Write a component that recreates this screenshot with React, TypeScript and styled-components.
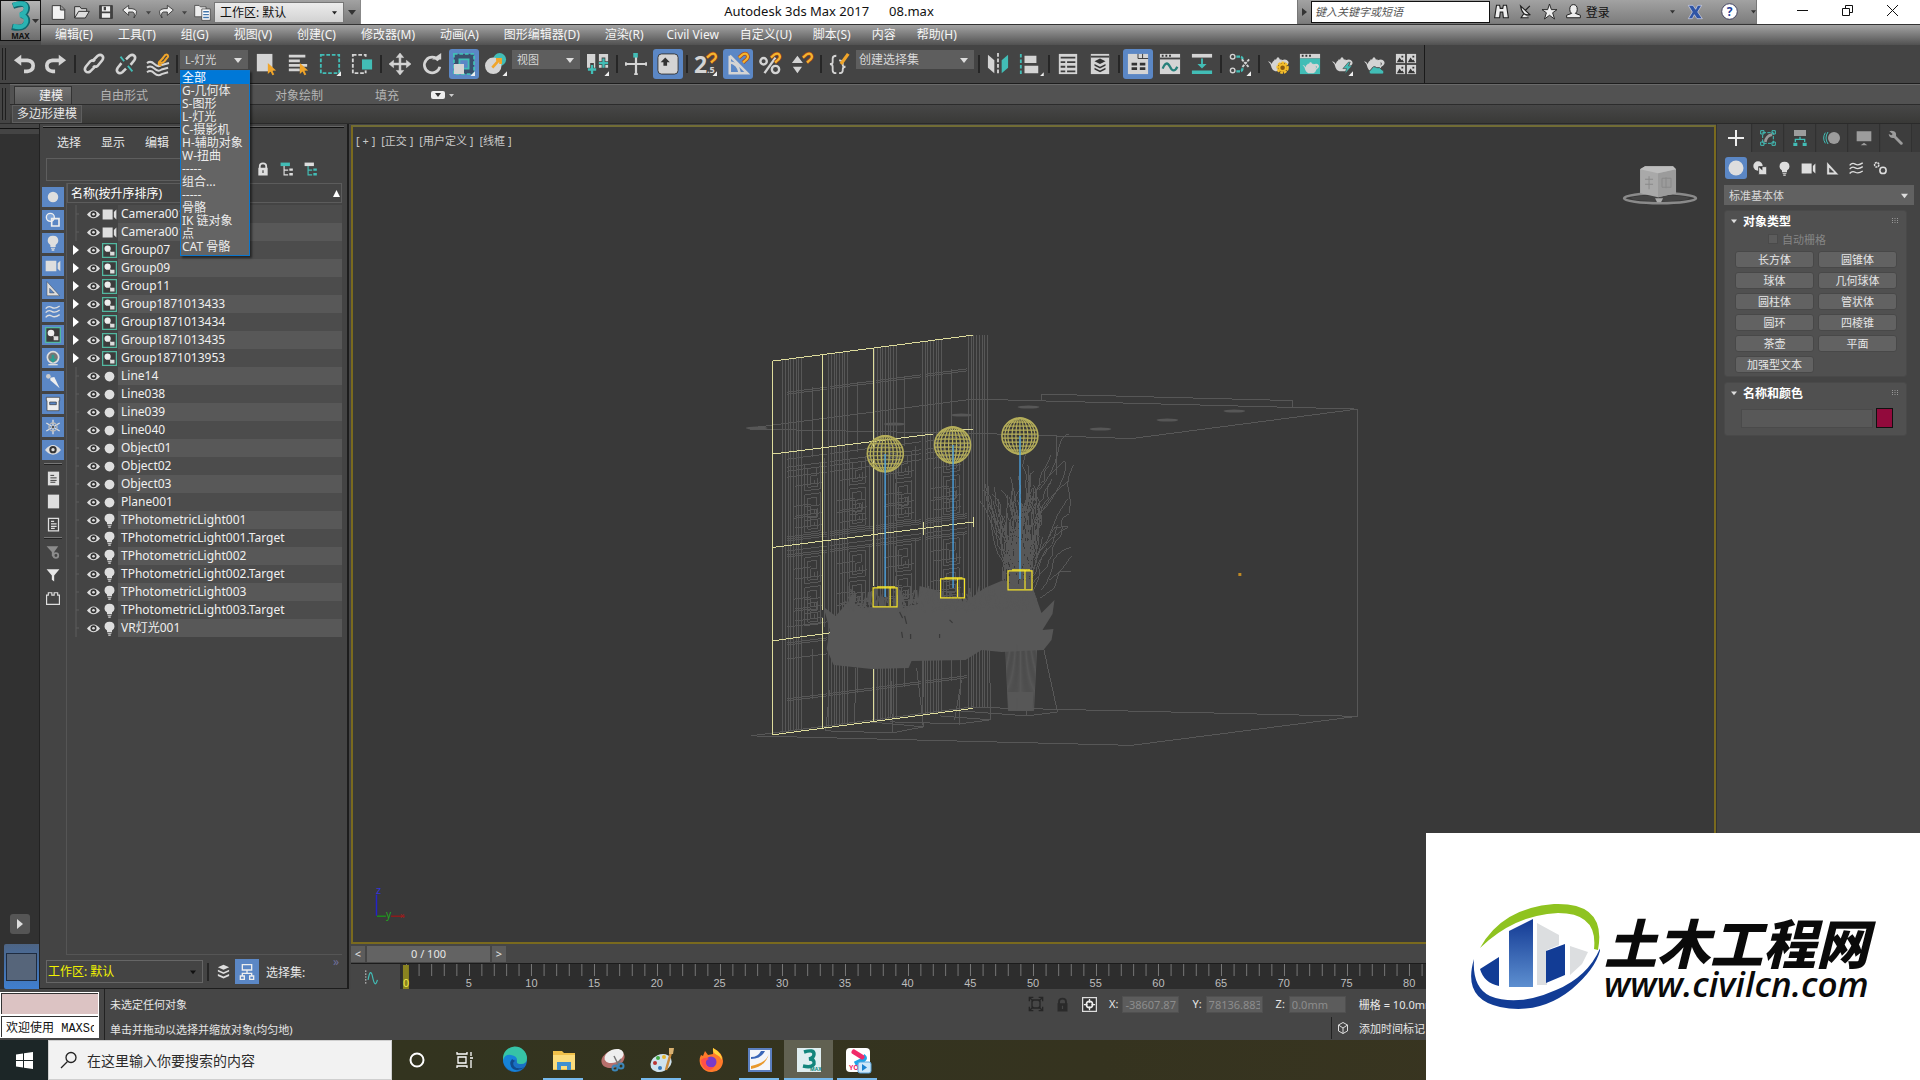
import React from "react";
import styled, { createGlobalStyle, css } from "styled-components";

const C = {
  icon: "#d4d4d4",
  teal: "#42bdb6",
  orange: "#f0a52a",
  blue: "#5b87c5",
  panel: "#444444",
  text: "#e6e6e6",
};

const Global = createGlobalStyle`
  * { box-sizing: border-box; }
  body { margin: 0; background: #393939; overflow: hidden; }
  body, button, input, select {
    font-family: "Noto Sans", "Noto Sans CJK SC", sans-serif;
    font-size: 12px;
  }
  button, input, select { margin: 0; padding: 0; border: 0; color: inherit; outline: 0; }
  button { background: none; }
  ul { list-style: none; margin: 0; padding: 0; }
  svg { display: block; flex: none; }
`;

/* ---------- icons ---------- */

const Cursor = () => <path d="M14 11l9 8-4 .4 2 4-2 .8-2-4-3 2.600z" fill={C.orange} />;
const Corner = () => <path d="M24 20v5h-5z" fill="#eee" />;
const Magnet = ({ x = 12, y = 0 }: { x?: number; y?: number }) => (
  <g transform={`translate(${x} ${y})`} fill="none">
    <path d="M1 5l4-3.500q4-2 5.500 1t-3 6l-2 2" stroke="#a8471c" strokeWidth="4" />
    <path d="M1 5l4-3.500q4-2 5.500 1t-3 6l-2 2" stroke="#f3b52e" strokeWidth="2.400" />
  </g>
);
const Teapot = () => (
  <path d="M1 9q3 0 4 3 1-3 3-4V7h2l1-2h2l1 2h2v1q5-2 7 1t-3 6q-1 4-4 5H9q-3-1-4-4-1-5-4-7zm18 1q1 2 0 4 3-3 0-4z" fill={C.icon} />
);

const icons: Record<string, React.ReactNode> = {
  undo: <path d="M9 2L1 8l8 6v-4h6q5 0 5 4t-5 4h-3v4h4q8-1 8-8t-8-8H9z" fill={C.icon} />,
  redo: <path d="M15 2l8 6-8 6v-4H9q-5 0-5 4t5 4h2v4H8q-8-1-8-8t8-8h7z" fill={C.icon} />,
  link: (
    <g fill="none" stroke={C.icon} strokeWidth="2.800">
      <path d="M10 9l6-6q3-2 5 0t0 5l-5 6q-3 2-5 0" />
      <path d="M14 14l-6 6q-3 2-5 0t0-5l5-6q3-2 5 0" />
    </g>
  ),
  unlink: (
    <g fill="none" stroke={C.icon} strokeWidth="2.800">
      <path d="M12 7l4-4q3-2 5 0t0 5l-4 5M12 17l-4 4q-3 2-5 0t0-5l4-5" />
      <path d="M6 4l4 5M14 14l5 6" stroke={C.teal} strokeWidth="2" />
    </g>
  ),
  bind: (
    <g fill="none" stroke={C.icon} strokeWidth="2.200">
      <path d="M0 11q4-3 8 1t8 1l8-2M0 16q4-3 8 1t8 1l7-2M0 21q4-3 8 1t8 1l7-2" />
      <path d="M16 7l4-5q3-1 3 2l-4 5q-3 3-5 1M18 5l-5 5q-1 4 3 3" stroke={C.orange} />
    </g>
  ),
  select: (<g><path d="M2 1h17v19H2z" fill={C.icon} /><Cursor /></g>),
  selectName: (<g><path d="M2 2h18v3H2zM2 7h12v3H2zM2 12h20v3H2zM2 17h12v3H2z" fill={C.icon} /><Cursor /></g>),
  region: (<g><path d="M2 2h20v20H2z" fill="none" stroke={C.teal} strokeWidth="2" strokeDasharray="4 2" /><Corner /></g>),
  crossing: (<g><path d="M2 2h14v20H2z" fill="none" stroke={C.icon} strokeWidth="2" strokeDasharray="4 2" /><path d="M10 5h15v14H10z" fill="#444" /><path d="M12 7h11v11H12z" fill={C.teal} /></g>),
  move: <path d="M12 0l4 5h-3v6h6V8l5 4-5 4v-3h-6v6h3l-4 5-4-5h3v-6H5v3l-5-4 5-4v3h6V5H8z" fill={C.icon} stroke={C.icon} strokeWidth=".6" />,
  rotate: (<g><path d="M19 8a8.500 8.500 0 1 0 1.500 7" fill="none" stroke={C.icon} strokeWidth="3" /><path d="M12 7h10V0z" fill={C.icon} /></g>),
  scale: (
    <g fill="none">
      <path d="M1 1h22v22H1z" fill="#3a4f6c" stroke={C.teal} strokeWidth="2" strokeDasharray="4 2" />
      <path d="M7 7h10v10H7z" stroke={C.teal} strokeWidth="2" fill="#5b87c5" />
      <path d="M1 12h11v11H1z" fill={C.icon} /><Corner />
    </g>
  ),
  place: (
    <g>
      <circle cx="16" cy="7" r="7" fill={C.teal} /><circle cx="9" cy="14" r="9" fill={C.icon} />
      <path d="M8 16l8-9M12 7h5v5" fill="none" stroke={C.orange} strokeWidth="3" /><Corner />
    </g>
  ),
  pivot: (
    <g>
      <path d="M0 1h9v17H0zM13 1h10v15H13z" fill={C.icon} />
      <path d="M5.500 11v12M0 18h11M18 5v12M13 11h11" stroke="#444" strokeWidth="4" />
      <path d="M5.500 13v10M1 18h9M18 6v10M13 11h10" stroke={C.teal} strokeWidth="2.500" /><Corner />
    </g>
  ),
  manip: (<g><path d="M12 4v19M1 12h22" stroke={C.icon} strokeWidth="2.400" /><path d="M1 10v4M23 10v4M10 23h4" stroke={C.icon} strokeWidth="2" /><path d="M9 0h5v5H9z" fill={C.teal} /></g>),
  keyboard: (<g><rect x="1" y="1" width="22" height="22" rx="4" fill={C.icon} stroke="#333" /><path d="M9 5l5 5h-3v4H7v-4H4z" fill="#333" /></g>),
  snap: (<g fontFamily="Noto Sans" fontWeight="700" fill={C.icon}><text x="-1" y="22" fontSize="25">2</text><text x="13" y="22" fontSize="10">.5</text><Magnet /><Corner /></g>),
  angle: (<g fill="none"><path d="M3 3v19h19L3 3M3 10q9 1 11 12" stroke={C.icon} strokeWidth="2.800" /><Magnet /></g>),
  percent: (<g fill="none" stroke={C.icon} strokeWidth="2.600"><circle cx="5" cy="9" r="3.500" /><circle cx="18" cy="18" r="4" /><path d="M18 5L6 22" /><Magnet /></g>),
  spinner: (<g><path d="M7 3l6 8H1zM7 22l5-7H2z" fill={C.icon} /><Magnet /></g>),
  named: (<g fill="none" stroke={C.icon} strokeWidth="2"><path d="M8 3q-4 0-4 3v4q0 2-3 2 3 0 3 3v4q0 3 4 3M11 8q4 0 4 3v2q0 2 3 2-3 0-3 3v1q0 3-4 3" /><path d="M21 1l-8 11" stroke={C.orange} strokeWidth="3.500" /></g>),
  mirror: (<g><path d="M1 2l7 6v14l-7-6z" fill={C.icon} /><path d="M23 2l-7 6v14l7-6z" fill={C.teal} /><path d="M12 0v24" stroke={C.icon} strokeWidth="2" strokeDasharray="4 2" /></g>),
  align: (<g><path d="M2 1v22" stroke={C.teal} strokeWidth="2" strokeDasharray="4 2" /><path d="M6 3h13v8H6zM6 14h15v8H6z" fill={C.icon} /><path d="M27 21v4h-4z" fill="#eee" /></g>),
  layers: (<g><path d="M2 1h20v22H2z" fill={C.icon} /><path d="M4 5h16M4 10h5M11 10h9M4 15h5M11 15h9M4 20h5M11 20h9" stroke="#3c3c3c" strokeWidth="2" /></g>),
  toggle: (<g><path d="M2 1h20v22H2z" fill={C.icon} /><path d="M2 4h20" stroke="#444" strokeWidth="2" /><path d="M12 6l6 3-6 3-6-3zM6 12l6 3 6-3v2l-6 3-6-3zM6 16l6 3 6-3v2l-6 3-6-3z" fill="#333" /></g>),
  ribbon: (<g><path d="M1 1h22v22H1z" fill={C.icon} /><path d="M12 1v5h11M17 1v5" stroke="#333" fill="none" /><path d="M5 12h6M14 12h6M5 17h6M14 17h6" stroke="#333" strokeWidth="3" /></g>),
  curve: (<g><path d="M1 1h22v22H1z" fill={C.icon} /><path d="M1 6h22" stroke="#444" strokeWidth="2" /><path d="M3 3h2M7 3h2M11 3h2" stroke="#333" strokeWidth="2" /><path d="M4 17q4-10 8-2t8 0" fill="none" stroke="#27807a" strokeWidth="2.500" /></g>),
  schematic: (<g><path d="M1 1h22v4H1z" fill={C.icon} /><path d="M1 19h22v4H1zM11 6h2v6h4l-5 5-5-5h4z" fill={C.teal} /></g>),
  material: (<g fill="none"><path d="M8 4h4q3 0 3 4M8 20h4q3 0 3-5" stroke={C.teal} strokeWidth="2.500" strokeDasharray="4 1" /><circle cx="4" cy="4" r="2.500" stroke={C.icon} strokeWidth="1.500" /><circle cx="4" cy="19" r="2.500" stroke={C.icon} strokeWidth="1.500" /><path d="M14 7l8 9M22 7l-8 9" stroke={C.icon} strokeWidth="2" strokeDasharray="3 1" /><Corner /></g>),
  renderSetup: (<g><Teapot /><circle cx="17" cy="16" r="5.500" fill="#8a5a10" stroke="#f5bf2c" strokeWidth="2.500" strokeDasharray="3 1" /><circle cx="17" cy="16" r="3.500" fill="none" stroke="#f5bf2c" strokeWidth="2" /></g>),
  frame: (<g><path d="M1 1h22v5H1z" fill={C.icon} /><path d="M3 3h2M7 3h2M11 3h2" stroke="#333" strokeWidth="2" /><path d="M1 6h22v17H1z" fill={C.teal} /><g transform="translate(3 6) scale(.8)"><Teapot /></g></g>),
  render: (<g><Teapot /><path d="M19 10l-6 7h4l-2 6 8-9h-4l2-4z" fill={C.teal} stroke="#444" strokeWidth=".7" /><Corner /></g>),
  cloud: (<g><Teapot /><path d="M8 23q-3-3 1-5 2-5 6-2 4-1 5 2 4 1 2 5z" fill={C.teal} stroke="#444" /></g>),
  gallery: (
    <g>{[[1, 1], [13, 1], [1, 13], [13, 13]].map(([x, y]) => (
      <g key={`${x}-${y}`} transform={`translate(${x} ${y})`}><path d="M0 0h10v10H0z" fill={C.icon} /><path d="M1 9l3-5 2 3 1-1 2 3zM6 2h2v2H6z" fill="#333" /></g>
    ))}</g>
  ),
  circle: <circle cx="12" cy="12" r="9" fill="#dedede" />,
  shapes: (<g><circle cx="8" cy="8" r="6" fill="#7ea4d8" stroke="#eee" strokeWidth="2" /><path d="M10 10h11v11H10z" fill="none" stroke="#eee" strokeWidth="2.500" /></g>),
  bulb: <path d="M12 1q8 0 8 8 0 3-4 6v3H8v-3Q4 12 4 9q0-8 8-8zM9 19h6v1.500H9zM10 21.500h4v2h-4z" fill="#dedede" />,
  camera: <path d="M1 4h16v16H1zM23 4v16l-4-4V8z" fill="#dedede" />,
  ruler: <path fillRule="evenodd" d="M3 1l19 21H3zm4 10v7h7z" fill="#dedede" stroke="#333" strokeWidth=".6" />,
  waves: <path d="M1 7q4-5 9-2t12-2M1 13q4-5 9-2t12-2M1 20q4-5 9-2t12-2" stroke="#dedede" strokeWidth="2" fill="none" />,
  group: (<g><path d="M1 1h22v22H1z" fill="#3c3c3c" stroke="#52b8a0" strokeWidth="2" /><circle cx="9" cy="9" r="5" fill="#eee" /><path d="M10 10l4 4h6v6h-7v-5z" fill="#ddd" /></g>),
  xref: (<g><circle cx="12" cy="11" r="8.500" fill="#777" stroke="#dedede" strokeWidth="2.500" /><path d="M10 7h4v6h4l-6 6-6-6h4z" fill="#2a9d8f" /><path d="M5 22h14" stroke="#dedede" strokeWidth="2" /></g>),
  bone: (<g><circle cx="5" cy="5" r="3.500" fill="#ccc" /><path d="M8 7l6-1 8 17-14-12z" fill="#eee" /></g>),
  container: <path fillRule="evenodd" d="M2 2h20v5h-1v15H3V7H2zm5 7v4h10V9z" fill="#eee" stroke="#333" />,
  frozen: (<g stroke="#dedede" strokeWidth="2" fill="none"><path d="M12 1v22M2 6l20 12M2 18L22 6" /><circle cx="12" cy="12" r="6" stroke="#bbb" /><circle cx="12" cy="12" r="2" fill="#555" stroke="none" /></g>),
  eye: (<g><path d="M0 12q12-15 24 0-12 14-24 0z" fill="#dedede" /><circle cx="12" cy="11.500" r="5.500" fill="#333" /><circle cx="12" cy="11.500" r="2.500" fill="#ddd" /></g>),
  doc: (<g><path d="M3 1h18v22H3z" fill="#dedede" /><path d="M7 7h6M7 11h10M7 15h10M7 18h8" stroke="#333" strokeWidth="1.500" /></g>),
  blank: <path d="M3 1h18v22H3z" fill="#dedede" />,
  docLine: <path d="M4 2h16v20H4zM8 7h5M8 11h9M8 15h9M8 18h6" stroke="#dedede" strokeWidth="2" fill="none" />,
  filterOff: (<g><path d="M1 2h20l-7 10v10l-4-3v-7z" fill="#8c8c8c" /><circle cx="17" cy="18" r="4" fill="#444" stroke="#8c8c8c" strokeWidth="3" /></g>),
  filter: <path d="M1 2h22l-9 11v10l-4-3v-7z" fill="#e6e6e6" />,
  brick: <path d="M1 7h3V3h6v4h4V3h6v4h3v16H1z" stroke="#dedede" strokeWidth="2" fill="none" />,
  plus: <path d="M12 0v24M0 12h24" stroke="#eee" strokeWidth="3" />,
  modify: (<g fill="none"><path d="M4 4h16v16H4z" stroke={C.teal} strokeDasharray="5 2" strokeWidth="1.500" /><path d="M1 1h5v5H1zM18 1h5v5h-5zM1 18h5v5H1zM18 18h5v5h-5z" stroke={C.teal} strokeWidth="1.500" /><path d="M8 18q1-9 10-11" stroke="#999" strokeWidth="4" /></g>),
  hierarchy: (<g><path d="M3 0h18v9H3z" fill="#9c9c9c" /><path d="M12 10v4M5 18v-4h14v4" stroke={C.teal} strokeWidth="2" fill="none" /><path d="M2 19h6v5H2zM16 19h6v5h-6z" fill={C.teal} /></g>),
  motion: (<g><circle cx="15" cy="12" r="9" fill="#9c9c9c" /><path d="M6 3q-6 9 0 18M2 4q-5 8 0 16" stroke={C.teal} strokeWidth="1.500" fill="none" /></g>),
  display: <path d="M1 2h22v15H1zM7 23l5-4 5 4z" fill="#9c9c9c" />,
  wrench: <path d="M2 2q3-2 7 0t3 7l10 10q1 3-3 3L9 12q-7 1-8-6l4 2 2-2z" fill="#9c9c9c" />,
  systems: (<g fill="none" stroke="#dedede" strokeWidth="2.500"><circle cx="6" cy="6" r="3.500" strokeDasharray="3 1" /><circle cx="16" cy="15" r="5" /></g>),
  shapes2: (<g><circle cx="8" cy="8" r="7.500" fill="#dedede" /><path d="M9 9h13v13H9z" fill="#dedede" stroke="#444" strokeWidth="1.500" /><path d="M9 9h6v6z" fill="#333" /></g>),
  stack: <path d="M12 1l9 4-9 4-9-4zM3 9l9 4 9-4v3l-9 4-9-4zM3 16l9 4 9-4v3l-9 4-9-4z" fill="#dedede" />,
  tree: <path d="M5 1h14v8H5zM12 9v5M5 18v-4h14v4M2 18h6v5H2zM16 18h6v5h-6z" stroke="#eee" strokeWidth="2" fill="none" />,
  lock: <path fillRule="evenodd" d="M5 10V7q0-6 7-6t7 6v3h1v13H4V10zm3 0h8V7q0-3-4-3T8 7zm3 4v5h2v-5z" fill="#dedede" />,
  lockOff: <path fillRule="evenodd" d="M5 10V7q0-6 7-6t7 6v3h1v13H4V10zm3 0h8V7q0-3-4-3T8 7zm3 4v5h2v-5z" fill="#2a2a2a" />,
  expand: (<g><path d="M1 1h16v6H1z" fill={C.teal} /><path d="M7 7v15h7M7 14h7" stroke="#ddd" strokeWidth="2" fill="none" /><path d="M16 11h6v4h-6zM16 19h6v4h-6z" fill="#ddd" /></g>),
  collapse: (<g><path d="M1 1h16v6H1z" fill="#ddd" /><path d="M7 7v15h7M7 14h7" stroke={C.teal} strokeWidth="2" fill="none" /><path d="M16 11h6v4h-6zM16 19h6v4h-6z" fill={C.teal} /></g>),
  newFile: <path d="M2 1h14l6 6v16H2zM15 1v7h7" fill="#f2f2f2" stroke="#333" strokeWidth="1.500" />,
  open: <path d="M1 21V4h8l2 3h8v4M1 21l6-10h16l-6 10z" fill="#ddd" stroke="#333" strokeWidth="1.500" />,
  save: (<g><path d="M1 1h22v22H1z" fill="#444" stroke="#222" /><path d="M5 2h14v9H5zM5 14h14v8H5z" fill="#eee" /><path d="M8 3h4v6H8z" fill="#444" /></g>),
  qundo: <path d="M10 2L1 9l9 8v-5h6q4 1 2 9 9-13-3-14h-5z" fill="#eee" stroke="#333" strokeWidth="1.300" />,
  qredo: <path d="M14 2l9 7-9 8v-5H8q-4 1-2 9-9-13 3-14h5z" fill="#eee" stroke="#333" strokeWidth="1.300" />,
  project: (<g stroke="#333"><path d="M1 2h6l2 2h8v14H1z" fill="#eee" /><path d="M11 7h12v16H11z" fill="#fff" /><path d="M13 11h8M13 15h8M13 19h8" stroke="#47a" strokeWidth="2" /></g>),
  binoculars: <path d="M4 2h5l1 5h4l1-5h5l3 20h-8l-1-9h-4l-1 9H1z" fill="#eee" stroke="#222" strokeWidth="1.800" />,
  dish: <path d="M4 3l15 14Q7 20 4 3zM12 10l7-7M9 16l-4 6h12" fill="#eee" stroke="#222" strokeWidth="1.800" />,
  star: <path d="M12 0l3 9h9l-7 5 3 10-8-6-8 6 3-10-7-5h9z" fill="#eee" stroke="#222" strokeWidth="1.500" />,
  user: <path d="M12 1q6 0 6 8 0 4-3 6l8 3v4H1v-4l8-3q-3-2-3-6 0-8 6-8z" fill="#eee" stroke="#222" strokeWidth="1.600" />,
  exchange: <path d="M2 2h7l4 6 3-6h6l-6 10 7 10h-8l-4-6-3 6H2l6-10z" fill="#2f55a5" stroke="#dde" />,
  help: (<g><circle cx="12" cy="12" r="11" fill="#fff" stroke="#335" strokeWidth="1.200" /><text x="12" y="18" textAnchor="middle" fontSize="17" fontWeight="700" fill="#1f3f9a">?</text></g>),
  isolate: <path d="M2 8V2h6M16 2h6v6M22 16v6h-6M8 22H2v-6M6 6h12v12H6zM3 3l5 5M21 3l-5 5M3 21l5-5M21 21l-5-5" fill="none" stroke="#262626" strokeWidth="2" />,
  absolute: (<g><path d="M1 1h22v22H1z" fill="#333" stroke="#ddd" strokeWidth="2" /><circle cx="12" cy="12" r="5" fill="none" stroke="#eee" strokeWidth="2.500" /><path d="M12 3v6M12 15v6M3 12h6M15 12h6" stroke="#eee" strokeWidth="2" /></g>),
  cube: <path d="M12 1l9 5v12l-9 5-9-5V6zM3 6l9 6 9-6M12 12v11" fill="none" stroke="#ddd" strokeWidth="2" />,
  miniCurve: (<g fill="none"><path d="M3 1v22" stroke="#ddd" strokeWidth="2" strokeDasharray="2 3" /><path d="M7 17Q11-6 15 13t8 4" stroke={C.teal} strokeWidth="2" /></g>),
};

const Icon = ({ name, size = 24 }: { name: string; size?: number }) => (
  <svg width={size} height={size} viewBox="0 0 24 24" overflow="visible" aria-hidden="true">{icons[name]}</svg>
);
const Caret = ({ color = "#ddd", size = 8 }: { color?: string; size?: number }) => (
  <svg width={size} height={size} viewBox="0 0 8 8" aria-hidden="true"><path d="M0 2h8L4 7z" fill={color} /></svg>
);

/* ---------- shared parts ---------- */

const Shell = styled.div`
  display: flex; flex-direction: column; min-height: 100vh; color: ${C.text}; background: ${C.panel};
`;
const Field = styled.label<{ $w: number; $h: number; $bg?: string; $border?: string; $fg?: string; $fs?: number; $pad?: number }>`
  display: grid; align-items: center; flex: none; width: ${p => p.$w}px; height: ${p => p.$h}px;
  background: ${p => p.$bg || "#5e5e5e"}; border: ${p => (p.$border ? `1px solid ${p.$border}` : 0)};
  color: ${p => p.$fg || "#d8d8d8"};
  > * { grid-area: 1 / 1; }
  > svg { justify-self: end; margin-right: 6px; pointer-events: none; }
  select { appearance: none; background: none; width: 100%; height: 100%; padding: 0 ${p => p.$pad ?? 5}px; font-size: ${p => p.$fs || 12}px; color: inherit; }
`;
type DropProps = { label: string; value: string; w: number; h: number; bg?: string; border?: string; fg?: string; fs?: number; pad?: number; caret?: string; caretSize?: number };
const Drop = (p: DropProps) => (
  <Field $w={p.w} $h={p.h} $bg={p.bg} $border={p.border} $fg={p.fg} $fs={p.fs} $pad={p.pad}>
    <select aria-label={p.label} defaultValue={p.value}><option>{p.value}</option></select>
    <Caret color={p.caret} size={p.caretSize} />
  </Field>
);

/* ---------- header ---------- */

const Header = styled.header`display: flex; height: 45px; background: linear-gradient(#fff 24px, #4a4a4a 24px);`;
const AppButton = styled.button`
  display: flex; flex-direction: column; align-items: center; width: 41px; height: 41px; flex: none;
  background: linear-gradient(#b5b5b5, #6d6d6d); border: 1px solid #111; color: #111; font-size: 8px; font-weight: 700; line-height: 9px;
`;
const HeadRows = styled.div`flex: 1; display: flex; flex-direction: column;`;
const TitleBar = styled.div`display: flex; height: 24px; background: #fff; color: #111;`;
const Quick = styled.div`
  display: flex; align-items: center; width: 320px; height: 24px; padding-left: 5px; flex: none;
  background: linear-gradient(#a2a2a2, #777); border-right: 1px solid #888;
`;
const QBtn = styled.button<{ $w?: number }>`display: flex; align-items: center; justify-content: center; width: ${p => p.$w || 24}px; height: 24px; flex: none;`;
const Title = styled.h1`
  flex: 1; margin: 0; display: flex; justify-content: center; gap: 20px; font-weight: 400; font-size: 13px; line-height: 23px;
`;
const InfoCenter = styled.div`display: flex; align-items: center; width: 460px; height: 24px; flex: none; background: linear-gradient(#a2a2a2, #7d7d7d); border: 1px solid #777; border-top: 0;`;
const InfoInput = styled.input`
  width: 180px; height: 22px; background: #fff; border: 1px solid #111; padding: 0 3px; font-size: 11px;
  &::placeholder { color: #555; font-style: italic; opacity: 1; }
`;
const SignIn = styled.button`width: 98px; height: 24px; display: flex; align-items: center; justify-content: space-between; padding-right: 8px; color: #111;`;
const WinButtons = styled.div`display: flex; width: 163px; padding-left: 23px; flex: none;`;
const WinBtn = styled.button`width: 45px; height: 20px; display: flex; align-items: center; justify-content: center;`;
const MenuBar = styled.nav`
  display: flex; align-items: center; height: 21px; padding-left: 2px; border-top: 1px solid #333;
  background: linear-gradient(#a3a3a3, #515151); color: #f5f5f5;
`;
const MenuItem = styled.button<{ $tight: boolean }>`padding: ${p => (p.$tight ? "0 11px 0 10px" : "0 13px 0 12px")}; line-height: 18px; white-space: nowrap;`;

const menus = ["编辑(E)", "工具(T)", "组(G)", "视图(V)", "创建(C)", "修改器(M)", "动画(A)", "图形编辑器(D)", "渲染(R)", "Civil View", "自定义(U)", "脚本(S)", "内容", "帮助(H)"];

const AppHeader = () => (
  <Header>
    <AppButton aria-label="应用程序菜单">
      <svg width="38" height="30" viewBox="0 0 38 30" aria-hidden="true">
        <path d="M11 5q13-5 14 2 0 5-6 7 7 1 6 7-3 8-15 5" fill="none" stroke="#12646b" strokeWidth="6" />
        <path d="M11 4q13-4 13 3 0 5-6 7 7 1 6 7-2 7-13 4" fill="none" stroke="#2ab3b2" strokeWidth="4.500" />
        <path d="M30 18h7l-3.500 4z" fill="#333" />
      </svg>
      MAX
    </AppButton>
    <HeadRows>
      <TitleBar>
        <Quick>
          <QBtn aria-label="新建"><Icon name="newFile" size={15} /></QBtn>
          <QBtn aria-label="打开"><Icon name="open" size={16} /></QBtn>
          <QBtn aria-label="保存"><Icon name="save" size={14} /></QBtn>
          <QBtn aria-label="撤消"><Icon name="qundo" size={16} /></QBtn>
          <QBtn $w={12} aria-label="撤消列表"><Caret color="#444" size={5} /></QBtn>
          <QBtn aria-label="重做"><Icon name="qredo" size={16} /></QBtn>
          <QBtn $w={12} aria-label="重做列表"><Caret color="#444" size={5} /></QBtn>
          <QBtn aria-label="项目文件夹"><Icon name="project" size={17} /></QBtn>
          <Drop label="工作区" value="工作区: 默认" w={130} h={21} bg="linear-gradient(#ececec,#d2d2d2)" border="#777" fg="#111" caret="#222" caretSize={5} />
          <QBtn $w={16} aria-label="自定义"><Caret color="#333" size={8} /></QBtn>
        </Quick>
        <Title><span>Autodesk 3ds Max 2017</span><span>08.max</span></Title>
        <InfoCenter>
          <QBtn $w={13} aria-label="展开"><svg width="5" height="8" viewBox="0 0 5 8"><path d="M0 0l5 4-5 4z" fill="#333" /></svg></QBtn>
          <InfoInput aria-label="搜索帮助" placeholder="键入关键字或短语" />
          <QBtn aria-label="搜索"><Icon name="binoculars" size={15} /></QBtn>
          <QBtn aria-label="通讯中心"><Icon name="dish" size={15} /></QBtn>
          <QBtn aria-label="收藏夹"><Icon name="star" size={15} /></QBtn>
          <QBtn aria-label="用户"><Icon name="user" size={15} /></QBtn>
          <SignIn>登录<Caret color="#333" size={5} /></SignIn>
          <QBtn aria-label="Exchange"><Icon name="exchange" size={16} /></QBtn>
          <QBtn $w={44} aria-label="帮助"><Icon name="help" size={17} /></QBtn>
          <Caret color="#333" size={5} />
        </InfoCenter>
        <WinButtons>
          <WinBtn aria-label="最小化"><svg width="11" height="11"><path d="M0 5.500h11" stroke="#111" /></svg></WinBtn>
          <WinBtn aria-label="还原"><svg width="11" height="11"><path d="M.5 3.500h7v7h-7zM3.500 3v-2.500h7v7H8" fill="none" stroke="#111" /></svg></WinBtn>
          <WinBtn aria-label="关闭"><svg width="11" height="11"><path d="M0 0l11 11M11 0L0 11" stroke="#111" /></svg></WinBtn>
        </WinButtons>
      </TitleBar>
      <MenuBar>{menus.map((m, i) => <MenuItem key={m} $tight={i > 8}>{m}</MenuItem>)}</MenuBar>
    </HeadRows>
  </Header>
);

/* ---------- main toolbar ---------- */

const ToolbarBox = styled.div`display: flex; height: 39px; background: ${C.panel}; border-bottom: 1px solid #1d1d1d;`;
const Tools = styled.div`display: flex; align-items: center; padding: 0 2px 0 2px; border-right: 1px solid #1a1a1a;`;
const Grip = styled.div`width: 4px; height: 32px; margin-left: 2px; border: solid #1e1e1e; border-width: 0 1px; flex: none;`;
const ToolGrip = styled(Grip)`margin: 0 2px 0 0;`;
const Tool = styled.button<{ $on?: boolean }>`
  width: 30px; height: 30px; margin: 0 1px; flex: none; display: flex; align-items: center; justify-content: center; border-radius: 3px;
  ${p => p.$on && css`background: ${C.blue};`}
`;
const Sep = styled.i`width: 2px; height: 18px; margin: 0 2px; background: #262626; flex: none;`;
const ComboSlot = styled.div`position: relative; display: flex; align-self: flex-start; padding: 5px 0 0 0; margin-right: 2px;`;
const Popup = styled.ul`
  position: absolute; z-index: 5; top: 25px; left: 0; width: 70px; padding-bottom: 2px;
  background: #646464; border: 1px solid #0a77cf; box-shadow: 2px 2px 2px rgba(0,0,0,.5);
`;
const Option = styled.li<{ $on?: boolean }>`
  height: 13px; line-height: 13px; padding-left: 1px; font-size: 12px; white-space: nowrap; color: #ececec;
  ${p => p.$on && css`background: #0078d7; color: #fff;`}
`;

const filterItems = ["全部", "G-几何体", "S-图形", "L-灯光", "C-摄影机", "H-辅助对象", "W-扭曲", "-----", "组合...", "-----", "骨骼", "IK 链对象", "点", "CAT 骨骼"];
const T = ({ n, on }: { n: string; on?: boolean }) => <Tool $on={on} aria-label={n} aria-pressed={!!on}><Icon name={n} size={22} /></Tool>;

const MainToolbar = () => (
  <ToolbarBox>
    <Tools>
      <ToolGrip />
      <T n="undo" /><T n="redo" /><Sep /><T n="link" /><T n="unlink" /><T n="bind" /><Sep />
      <ComboSlot>
        <Drop label="选择过滤器" value="L-灯光" w={68} h={19} fs={11} />
        <Popup role="listbox" aria-label="选择过滤器列表">
          {filterItems.map((t, i) => <Option key={i} role="option" aria-selected={i === 0} $on={i === 0}>{t}</Option>)}
        </Popup>
      </ComboSlot>
      <T n="select" /><T n="selectName" /><T n="region" /><T n="crossing" /><Sep />
      <T n="move" /><T n="rotate" /><T n="scale" on /><T n="place" />
      <ComboSlot><Drop label="参考坐标系" value="视图" w={68} h={19} fs={11} /></ComboSlot>
      <T n="pivot" /><Sep /><T n="manip" /><T n="keyboard" on /><Sep />
      <T n="snap" /><T n="angle" on /><T n="percent" /><T n="spinner" /><Sep /><T n="named" />
      <ComboSlot><Drop label="命名选择集" value="创建选择集" w={118} h={19} pad={3} /></ComboSlot>
      <Sep /><T n="mirror" /><T n="align" /><Sep /><T n="layers" /><T n="toggle" /><Sep />
      <T n="ribbon" on /><T n="curve" /><T n="schematic" /><Sep /><T n="material" /><Sep />
      <T n="renderSetup" /><T n="frame" /><T n="render" /><T n="cloud" /><T n="gallery" />
    </Tools>
  </ToolbarBox>
);

/* ---------- ribbon ---------- */

const RibbonBox = styled.div`display: flex; height: 40px; gap: 4px; background: ${C.panel}; border-bottom: 1px solid #2a2a2a; align-items: center;`;
const RibbonBody = styled.div`flex: 1; display: flex; flex-direction: column; align-self: stretch;`;
const RibbonTabs = styled.div`
  display: flex; align-items: flex-end; height: 21px; padding-left: 4px; background: #525252;
  border-top: 1px solid #6a6a6a; border-bottom: 1px solid #2c2c2c; color: #b4b4b4;
`;
const RibbonTab = styled.button<{ $w: number; $pad?: number; $on?: boolean }>`
  width: ${p => p.$w}px; height: 18px; padding-left: ${p => p.$pad || 0}px; line-height: 17px; text-align: left; white-space: nowrap;
  ${p => p.$on && css`background: linear-gradient(#727272, #5a5a5a); border: 1px solid #333; border-bottom: 0; color: #f0f0f0;`}
`;
const RibbonSub = styled.div`flex: 1; background: linear-gradient(#474747, #393937); display: flex; align-items: flex-start; padding-left: 2px;`;
const SubBtn = styled.button`height: 18px; padding: 0 4px; line-height: 16px; background: #4c4c4c; border: 1px solid #5e5e5e;`;

const Ribbon = () => (
  <RibbonBox>
    <Grip />
    <RibbonBody>
      <RibbonTabs>
        <RibbonTab $w={58} $pad={24} $on>建模</RibbonTab>
        <RibbonTab $w={203} $pad={28}>自由形式</RibbonTab>
        <RibbonTab $w={100}>对象绘制</RibbonTab>
        <RibbonTab $w={56}>填充</RibbonTab>
        <RibbonTab $w={30} aria-label="显示完整的功能区">
          <svg width="24" height="16" viewBox="0 0 24 16"><rect y="4" width="14" height="8" rx="2" fill="#eee" /><path d="M4 6h6L7 10z" fill="#333" /><path d="M18 7h5l-2.500 3z" fill="#ccc" /></svg>
        </RibbonTab>
      </RibbonTabs>
      <RibbonSub><SubBtn>多边形建模</SubBtn></RibbonSub>
    </RibbonBody>
  </RibbonBox>
);

/* ---------- scene explorer ---------- */

const Main = styled.main`flex: 1; display: flex; min-height: 0;`;
const LeftStrip = styled.aside`
  width: 40px; flex: none; display: flex; flex-direction: column; justify-content: flex-end; gap: 10px; padding-left: 4px;
  background: linear-gradient(#444 4px, #111 4px, #111 5px, #444 5px, #444 10px, #313131 10px); border-right: 1px solid #222;
`;
const Play = styled.button`width: 20px; height: 20px; margin-left: 6px; background: #555; border-radius: 3px; display: flex; align-items: center; justify-content: center;`;
const Layout = styled.button`height: 45px; padding: 8px 2px; background: linear-gradient(#4d6484, #3f7fd0); border-radius: 2px 0 0 2px;`;
const LayoutInner = styled.span`display: block; height: 28px; background: #56657a; border: 1px solid #1f2c40;`;
const Explorer = styled.section`width: 309px; flex: none; display: flex; flex-direction: column; background: ${C.panel}; border: solid #1d1d1d; border-width: 0 2px 1px 0;`;
const ExMenu = styled.div`display: flex; gap: 20px; margin: 3px 3px 0 3px; padding: 4px 0 0 14px; height: 30px; border-top: 1px solid #111; box-shadow: 0 -1px 0 #666; line-height: 18px; button { height: 20px; }`;
const ExSearch = styled.div`display: flex; align-items: center; gap: 10px; height: 24px; padding-left: 6px;`;
const ExInput = styled.input`width: 200px; height: 23px; background: #444; border: 1px solid #5e5e5e;`;
const ExBody = styled.div`flex: 1; display: flex; margin-top: 2px;`;
const Filters = styled.div`width: 26px; flex: none; display: flex; flex-direction: column; gap: 3px; padding: 4px 0 0 2px;`;
const FilterBtn = styled.button<{ $on?: boolean }>`
  width: 22px; height: 20px; display: flex; align-items: center; justify-content: center; background: ${p => (p.$on ? C.blue : "none")};
`;
const FilterSep = styled.hr`width: 18px; margin: 0 2px; border: 0; border-top: 1px solid #777; border-bottom: 1px solid #222;`;
const Tree = styled.div`flex: 1; border: solid #555; border-width: 0 0 1px 1px; margin-right: 5px;`;
const TreeHead = styled.button`
  display: flex; width: 100%; height: 20px; align-items: center; justify-content: space-between; padding: 0 1px 0 3px; border: 1px solid #5c5c5c; color: #fff;
`;
const TreeList = styled.ul`padding-top: 2px;`;
const TreeRow = styled.li`display: flex; align-items: center; height: 18px;`;
const Twist = styled.span`width: 18px; display: flex; justify-content: center; height: 18px; align-items: center;`;
const Kind = styled.span<{ $w: number }>`width: ${p => p.$w}px; display: flex; justify-content: center;`;
const NodeName = styled.span<{ $alt: boolean }>`
  flex: 1; height: 18px; line-height: 18px; padding-left: 3px; white-space: nowrap; color: #f0f0f0;
  background: ${p => (p.$alt ? "#585858" : "#4c4c4c")};
`;
const ExFoot = styled.div`display: flex; align-items: center; height: 33px; padding: 0 8px 0 6px;`;
const FootBtn = styled.button<{ $on?: boolean }>`width: 24px; height: 25px; display: flex; align-items: center; justify-content: center; background: ${p => (p.$on ? C.blue : "none")};`;
const FootBox = styled.div`display: flex; margin-right: 2px;`;
const FootLabel = styled.span`margin-left: 7px; flex: 1;`;
const More = styled.span`align-self: flex-start; color: #6f6f9a; line-height: 14px;`;

const of = (kind: string, names: string[]) => names.map(n => [n, kind] as [string, string]);
const nodes: [string, string][] = [
  ...of("camera", ["Camera001", "Camera001"]),
  ...of("group", ["Group07", "Group09", "Group11", "Group1871013433", "Group1871013434", "Group1871013435", "Group1871013953"]),
  ...of("circle", ["Line14", "Line038", "Line039", "Line040", "Object01", "Object02", "Object03", "Plane001"]),
  ...of("bulb", ["TPhotometricLight001", "TPhotometricLight001.Target", "TPhotometricLight002", "TPhotometricLight002.Target", "TPhotometricLight003", "TPhotometricLight003.Target", "VR灯光001"]),
];

const SceneExplorer = () => (
  <Explorer>
    <ExMenu><button>选择</button><button>显示</button><button>编辑</button></ExMenu>
    <ExSearch>
      <ExInput aria-label="查找" />
      <button aria-label="锁定"><Icon name="lock" size={14} /></button>
      <button aria-label="展开"><Icon name="expand" size={14} /></button>
      <button aria-label="折叠"><Icon name="collapse" size={14} /></button>
    </ExSearch>
    <ExBody>
      <Filters>
        {["circle", "shapes", "bulb", "camera", "ruler", "waves", "group", "xref", "bone", "container", "frozen", "eye"].map(n => (
          <FilterBtn key={n} $on aria-label={n}><Icon name={n} size={n === "circle" ? 14 : 16} /></FilterBtn>
        ))}
        <FilterSep />
        {["doc", "blank", "docLine"].map(n => <FilterBtn key={n} aria-label={n}><Icon name={n} size={15} /></FilterBtn>)}
        <FilterSep />
        {["filterOff", "filter", "brick"].map(n => <FilterBtn key={n} aria-label={n}><Icon name={n} size={14} /></FilterBtn>)}
      </Filters>
      <Tree>
        <TreeHead>名称(按升序排序)<svg width="7" height="7"><path d="M0 7h7L3.500 0z" fill="#fff" /></svg></TreeHead>
        <TreeList>
          {nodes.map(([name, kind], i) => (
            <TreeRow key={i}>
              <Twist>
                {kind === "group"
                  ? <svg width="6" height="10"><path d="M0 0l6 5-6 5z" fill="#fff" /></svg>
                  : <svg width="6" height="18"><path d="M3 0v18M3 9h5" stroke="#5c5c5c" fill="none" /></svg>}
              </Twist>
              <Kind $w={16}><Icon name="eye" size={13} /></Kind>
              <Kind $w={17}><Icon name={kind} size={kind === "circle" ? 13 : 15} /></Kind>
              <NodeName $alt={i % 2 === 1}>{name}</NodeName>
            </TreeRow>
          ))}
        </TreeList>
      </Tree>
    </ExBody>
    <ExFoot>
      <FootBox><Drop label="工作区" value="工作区: 默认" w={157} h={23} bg="none" border="#666" fg="#f3f300" caret="#111" caretSize={6} pad={1} /></FootBox>
      <Sep />
      <FootBtn aria-label="层"><Icon name="stack" size={15} /></FootBtn>
      <FootBtn $on aria-label="层次"><Icon name="tree" size={16} /></FootBtn>
      <FootLabel>选择集:</FootLabel>
      <More>»</More>
    </ExFoot>
  </Explorer>
);

/* ---------- viewport drawing ---------- */

let seed = 7;
const rnd = () => { seed = (seed * 16807) % 2147483647; return seed / 2147483647; };
const SLOPE = -0.1295;
const topY = (x: number) => 361 + (x - 772.6) * SLOPE;

const stripes = [[783, 803], [829, 848], [875, 897], [923, 943], [969, 988]].flatMap(([a, b]) => {
  const out: string[] = [];
  for (let x = a; x <= b; x += 2.7) {
    const y = topY(Math.min(x, 973));
    out.push(`M${x.toFixed(1)} ${y.toFixed(1)}V${(y + 373).toFixed(1)}`);
  }
  return out;
}).join("");

const bays = [[787, 827], [830, 873], [876, 921], [925, 967]];
const lattice = bays.flatMap(([a, b]) => {
  const w = b - a, out: string[] = [];
  for (const base of [120, 150, 162, 213, 243, 255]) {
    const m = a + w * 0.45;
    const P = (dx: number, dy: number) => `${(m + dx).toFixed(1)} ${(topY(m + dx) + base + dy - 12).toFixed(1)}`;
    out.push(`M${P(0, 0)}L${P(16, 0)}L${P(16, 26)}L${P(0, 26)}Z`);
    out.push(`M${P(3, 4)}L${P(12, 4)}L${P(12, 12)}L${P(6, 12)}L${P(6, 20)}L${P(10, 20)}L${P(10, 16)}`);
    out.push(`M${P(3, 4)}L${P(3, 23)}L${P(13, 23)}L${P(13, 15)}M${P(20, -4)}L${P(20, 30)}M${P(-12, 10)}L${P(6, 10)}M${P(-10, 20)}L${P(18, 20)}`);
  }
  for (const dy of [33, 35, 100, 108, 112, 118, 178, 180, 182, 192, 196, 198, 268, 284, 286, 300, 340, 342]) {
    out.push(`M${a} ${(topY(a) + dy).toFixed(1)}L${b} ${(topY(b) + dy).toFixed(1)}`);
  }
  out.push(`M${a + w * 0.65} ${topY(a) + 28}v70M${a + w * 0.65} ${topY(a) + 290}v50`);
  return out;
}).join("");

const branches = (() => {
  const out: string[] = [];
  for (let i = 0; i < 74; i++) {
    let x = 1006 + rnd() * 28, y = 596;
    const spread = (rnd() - 0.5) * 2, end = 490 + rnd() * 60 - (i % 6 === 0 ? 40 : 0);
    let d = `M${x.toFixed(1)} ${y}`;
    while (y > end) {
      const ny = y - 10 - rnd() * 12;
      const nx = x + spread * (3 + rnd() * 4) + (rnd() - 0.5) * 9;
      d += `Q${(x + (rnd() - 0.5) * 9).toFixed(1)} ${((y + ny) / 2).toFixed(1)} ${nx.toFixed(1)} ${ny.toFixed(1)}`;
      x = nx; y = ny;
    }
    out.push(d);
  }
  return out.join("");
})();

const trunk = (() => {
  const out: string[] = [];
  for (let i = 0; i < 26; i++) out.push(`M${1006 + i * 1.25} 645L${1009 + i} 711`);
  return out.join("");
})();

const fuzz = (() => {
  const out: string[] = [];
  for (let i = 0; i < 260; i++) {
    const x = 846 + rnd() * 192;
    const y = 600 + rnd() * 12;
    out.push(`M${x.toFixed(0)} ${y.toFixed(0)}l${((rnd() - 0.5) * 10).toFixed(0)} ${(-rnd() * 16).toFixed(0)}`);
  }
  return out.join("");
})();

const Sphere = ({ x, y }: { x: number; y: number }) => (
  <g fill="none" stroke="#b5ae5a" strokeWidth="1.200">
    <circle cx={x} cy={y} r="18" strokeWidth="1.600" />
    {[4, 8, 12, 15].map(r => <ellipse key={r} cx={x} cy={y} rx={r} ry="18" />)}
    {[-14, -10, -6, -2, 2, 6, 10, 14].map(d => { const h = Math.sqrt(324 - d * d); return <path key={d} d={`M${x - h} ${y + d}H${x + h}`} />; })}
    <path d={`M${x} ${y - 18}v36`} />
  </g>
);
const Target = ({ x, y }: { x: number; y: number }) => (
  <g fill="none" stroke="#f5e32a" strokeWidth="1.200">
    <path d={`M${x} ${y + 1}h24v19h-24z`} /><path d={`M${x + 17} ${y}v19M${x + 4} ${y}h18`} />
  </g>
);

const Scene = styled.svg`position: absolute; inset: 0; width: 100%; height: 100%;`;
const SceneDrawing = () => (
  <Scene viewBox="353 127 1362 815" preserveAspectRatio="xMidYMid meet" role="img" aria-label="场景线框">
    <g fill="none" stroke="#575757" strokeWidth="1" shapeRendering="crispEdges">
      <path d="M750 428L973 399L1358 409L1132 438.500L1000 434L750 429M1358.500 409V717M751 736L1132 745.500L1358 716.500L973 707.500M751 736L973 707M1042.500 401V394L1293.500 400.500V407" />
      <path d={stripes} />
      <path d={lattice} />
      <path d={branches} />
      <path d="M1035 560q12-20 20-32l14-2M1042 550q10-14 27-23M1046 545l12-30 10-16M1036 525q12-30 33-44M1044 510q12-14 20-33 6-20-2-14l-12 12M1040 490q14-18 18-36 3-20 12-20M1057 435v40M1042 590q10-12 12-30 6-10 18-13M1050 580l10-8 12-1M1041 598l14-10 4-14 13-18" />
      <path d="M856 668L855 724M891 668L893 733M924 660L923 725M961 658L960 725M917 668L924 727M1044 648L1058 712L1027 716L960 711M826 731L893 733L924 727L870 722M890 722L960 724L991 720L940 716M1027 711V716M990 650L991 720M962 680L955 720M830 690L826 731" />
    </g>
    <g fill="#575757">
      {[[1029, 407], [1235, 411], [1168, 420], [1101, 429], [962, 415], [895, 424], [757, 428]].map(([x, y]) => <ellipse key={x} cx={x} cy={y} rx="11" ry="1.500" />)}
      <path d="M824 607L836 616L850 600L862 608L880 606L905 608L918 604L920 586L936 590L948 598L966 602L985 588L1004 580L1020 588L1034 590L1042 613L1055 600L1053 614L1043 630L1054 629L1052 640L1044 650L1002 652L982 650L966 660L912 661L909 668L872 669L834 665L827 649L830 630Z" />
      <path d="M1008 692h26l-1 19h-24z" />
    </g>
    <path d={fuzz} stroke="#575757" strokeWidth="1.500" />
    <path d={trunk} stroke="#575757" strokeWidth="1" />
    <path d="M900 612l3 6M905 616l2 8M902 632l1 6M911 634v5M940 634v4M950 620l3 3" stroke="#393939" strokeWidth="1.200" />
    <g fill="none" stroke="#dedc9c" strokeWidth="1" shapeRendering="crispEdges">
      <path d="M772.500 361V735M822.500 355V610M822.500 618V728M873.500 348V586M873.500 669V722" />
      <path d="M772.500 361L973.500 335M772.500 454L933 434M950 431L973.500 429M772.500 547.500L973.500 522M772.500 641L830 633M772.500 735L973.500 708.500M923.500 522v13M973.500 517v10" />
    </g>
    <Sphere x={885.700} y={453.700} /><Sphere x={953} y={445} /><Sphere x={1020.400} y={436} />
    <path d="M885.500 454V597M953.500 445V588M1020.500 436V579" stroke="#4aa0de" strokeWidth="1.400" />
    <Target x={873.500} y={587} /><Target x={941} y={578} /><Target x={1008.500} y={570} />
    <path d="M1239 573h3v3h-3z" fill="#c08a24" />
    <g>
      <ellipse cx="1661" cy="198" rx="36" ry="5" fill="none" stroke="#8a8a8a" strokeWidth="2.500" />
      <ellipse cx="1661" cy="198" rx="29" ry="3" fill="#454545" />
      <path d="M1641 169l5-3h28l3 3v24l-18 4-18-4z" fill="#a9a9a9" /><path d="M1659 173l18-4v24l-18 4z" fill="#9b9b9b" /><path d="M1641 169l5-3h28l3 3-18 4z" fill="#bdbdbd" />
      <path d="M1646 179h8M1646 184h8M1650 176v13M1663 178h9v9h-9zM1667 177v11" stroke="#8a8a8a" fill="none" />
      <path d="M1656 198h8l-2 4h-4z" fill="#aaa" />
    </g>
    <path d="M376.500 895V916" stroke="#2424c8" strokeWidth="1.500" /><path d="M377 916.500h9" stroke="#1d8a1d" strokeWidth="1.500" /><path d="M391 916.500h14" stroke="#8c1c1c" strokeWidth="1.500" />
    <text x="376" y="894" fontSize="11" fill="#3434d8">z</text><text x="386" y="918" fontSize="10" fill="#1faa1f">y</text><text x="400" y="918" fontSize="8" fill="#a02020">x</text>
  </Scene>
);

const ViewCol = styled.section`flex: 1; min-width: 0; display: flex; flex-direction: column; margin-left: 2px;`;
const Viewport = styled.div`position: relative; flex: 1; margin-top: 1px; background: #393939; border: 2px solid #7a6a1e; border-top-color: #716c35; overflow: hidden;`;
const ViewLabel = styled.div`position: relative; z-index: 1; display: flex; gap: 6px; padding: 7px 3px; font-size: 11px; line-height: 14px; color: #c8c8c8; button { font-size: 11px; line-height: 14px; }`;
const SliderRow = styled.div`display: flex; align-items: center; gap: 2px; height: 19px; background: #464646; font-size: 11px;`;
const Step = styled.button`width: 14px; height: 16px; background: #5c5c5c; font-size: 11px; line-height: 14px;`;
const Thumb = styled.button`width: 123px; height: 16px; background: #636363; font-size: 11px; line-height: 14px;`;
const Ruler = styled.div`display: flex; height: 26px; padding-right: 56px; background: linear-gradient(90deg, #464646 49px, #2d2d2d 49px); border-top: 1px solid #1c1c1c;`;
const RulerBtn = styled.button`width: 55px; height: 25px; display: flex; align-items: center; padding-left: 13px; flex: none;`;
const Frames = styled.div`flex: 1; display: grid; grid-template-columns: repeat(20, 1fr);`;
const Cell = styled.div<{ $now?: boolean }>`
  padding-top: 13px; height: 25px; color: #bdbdbd; font: 11px/12px "Liberation Sans", sans-serif;
  background: linear-gradient(90deg, #777 1px, transparent 1px) 0 0 / 20% 12px repeat-x;
  span { display: inline-block; transform: translateX(-50%); ${p => p.$now && css`background: #8a8320; color: #f0e84a; margin-top: -12px; padding-top: 12px;`} }
`;

const ViewportColumn = () => (
  <ViewCol>
    <Viewport>
      <ViewLabel><button>[ + ]</button><button>[正交 ]</button><button>[用户定义 ]</button><button>[线框 ]</button></ViewLabel>
      <SceneDrawing />
    </Viewport>
    <SliderRow><Step aria-label="上一帧">&lt;</Step><Thumb>0 / 100</Thumb><Step aria-label="下一帧">&gt;</Step></SliderRow>
    <Ruler>
      <RulerBtn aria-label="打开迷你曲线编辑器"><Icon name="miniCurve" size={14} /></RulerBtn>
      <Frames>{Array.from({ length: 20 }, (_, i) => <Cell key={i} $now={i === 0}><span>{i * 5}</span></Cell>)}</Frames>
    </Ruler>
  </ViewCol>
);

/* ---------- command panel ---------- */

const Panel = styled.aside`width: 204px; flex: none; padding-left: 4px; background: ${C.panel}; border-left: 1px solid #333; font-size: 11px;`;
const PanelTabs = styled.div`display: flex; height: 28px; background: #3a3a3a; gap: 1px;`;
const PanelTab = styled.button<{ $on?: boolean }>`width: 31px; height: 28px; display: flex; align-items: center; justify-content: center; background: ${p => (p.$on ? C.panel : "#3d3d3d")}; border-right: 1px solid #313131;`;
const Cats = styled.div`display: flex; gap: 2px; padding: 5px 3px 6px 4px;`;
const Cat = styled.button<{ $on?: boolean }>`width: 22px; height: 22px; border-radius: 3px; display: flex; align-items: center; justify-content: center; background: ${p => (p.$on ? C.blue : "none")};`;
const PanelPad = styled.div`padding-left: 3px;`;
const Rollout = styled.section`width: 183px; margin-top: 5px; padding-bottom: 3px; background: #505050; border: 1px solid #494949; border-radius: 3px;`;
const RollHead = styled.button`
  display: flex; align-items: center; width: 100%; height: 19px; padding: 0 7px 0 6px; gap: 6px; font-weight: 700; color: #fff;
  span { flex: 1; text-align: left; }
`;
const Check = styled.label`
  display: flex; align-items: center; gap: 4px; height: 18px; padding-left: 43px; color: #858585; font-size: 11px;
  input { appearance: none; width: 10px; height: 10px; background: #5c5c5c; border: 1px solid #4a4a4a; }
`;
const Buttons = styled.div`display: grid; grid-template-columns: 1fr 1fr; gap: 4px; padding: 3px 9px 0 10px;`;
const PBtn = styled.button`height: 17px; line-height: 15px; font-size: 11px; background: #626262; border: 1px solid #484848; border-radius: 3px;`;
const NameRow = styled.div`display: flex; align-items: center; gap: 3px; padding: 6px 13px 4px 16px; input { flex: 1; min-width: 0; height: 19px; background: #585858; border: 1px solid #4a4a4a; }`;
const Swatch = styled.button`width: 17px; height: 20px; background: #920a3c; border: 1px solid #111;`;
const Dots = () => <svg width="7" height="6" aria-hidden="true"><path d="M0 .5h7M0 2.500h7M0 4.500h7" stroke="#999" strokeDasharray="1 1.500" /></svg>;

const CommandPanel = () => (
  <Panel>
    <PanelTabs>{["plus", "modify", "hierarchy", "motion", "display", "wrench"].map((n, i) => <PanelTab key={n} $on={i === 0} aria-label={n}><Icon name={n} size={16} /></PanelTab>)}</PanelTabs>
    <Cats>{["circle", "shapes2", "bulb", "camera", "ruler", "waves", "systems"].map((n, i) => <Cat key={n} $on={i === 0} aria-label={n}><Icon name={n} size={i === 0 ? 20 : 15} /></Cat>)}</Cats>
    <PanelPad>
      <Drop label="几何体类型" value="标准基本体" w={190} h={20} fs={11} bg="#616161" caretSize={7} />
      <Rollout>
        <RollHead><Caret color="#ddd" size={6} /><span>对象类型</span><Dots /></RollHead>
        <Check><input type="checkbox" disabled />自动栅格</Check>
        <Buttons>{["长方体", "圆锥体", "球体", "几何球体", "圆柱体", "管状体", "圆环", "四棱锥", "茶壶", "平面", "加强型文本"].map(b => <PBtn key={b}>{b}</PBtn>)}</Buttons>
      </Rollout>
      <Rollout>
        <RollHead><Caret color="#ddd" size={6} /><span>名称和颜色</span><Dots /></RollHead>
        <NameRow><input aria-label="名称" /><Swatch aria-label="对象颜色" /></NameRow>
      </Rollout>
    </PanelPad>
  </Panel>
);

/* ---------- status bar ---------- */

const Status = styled.footer`display: flex; height: 51px; background: #464646; font-size: 11px;`;
const Listener = styled.div`width: 99px; margin: 3px 0 2px 0; flex: none; display: flex; flex-direction: column; gap: 2px; background: #fff; border: 1px solid #fff;`;
const ListInput = styled.input<{ $pink?: boolean }>`height: 21px; width: 100%; padding: 0 4px; border: solid #333; border-width: 1px 0 0 1px; background: ${p => (p.$pink ? "#dcc3c3" : "#fff")}; color: #111; font: 12px "Liberation Mono", "Noto Sans CJK SC", monospace;`;
const Prompts = styled.div`width: 924px; margin-left: 5px; padding: 7px 0 0 5px; border-left: 1px solid #222; display: flex; flex-direction: column; gap: 7px; line-height: 18px; flex: none;`;
const Coords = styled.div`display: flex; flex-direction: column; padding-top: 2px;`;
const CoordRow = styled.div`display: flex; align-items: center; height: 26px; white-space: nowrap;`;
const CoordIcon = styled.button`width: 27px; display: flex; flex: none;`;
const Coord = styled.label`
  display: flex; align-items: center; gap: 4px; margin-right: 13px; line-height: 16px;
  input { width: 57px; height: 17px; padding: 0 2px; background: #5c5c5c; border: 1px solid #505050; color: #8d8d8d; font-size: 11px; }
`;
const TagRow = styled.div`display: flex; align-items: center; gap: 10px; height: 22px; margin-left: 303px; padding-left: 5px; border-left: 1px solid #222; white-space: nowrap;`;

const StatusBar = () => (
  <Status>
    <Listener><ListInput $pink aria-label="宏录制器" /><ListInput aria-label="侦听器" defaultValue="欢迎使用 MAXScript" /></Listener>
    <Prompts><span>未选定任何对象</span><span>单击并拖动以选择并缩放对象(均匀地)</span></Prompts>
    <Coords>
      <CoordRow>
        <CoordIcon aria-label="孤立"><Icon name="isolate" size={16} /></CoordIcon>
        <CoordIcon aria-label="锁定"><Icon name="lockOff" size={15} /></CoordIcon>
        <CoordIcon aria-label="绝对模式"><Icon name="absolute" size={15} /></CoordIcon>
        <Coord>X:<input defaultValue="-38607.875mm" /></Coord>
        <Coord>Y:<input defaultValue="78136.883mm" /></Coord>
        <Coord>Z:<input defaultValue="0.0mm" /></Coord>
        <span>栅格 = 10.0mm</span>
      </CoordRow>
      <TagRow><Icon name="cube" size={12} /><span>添加时间标记</span></TagRow>
    </Coords>
  </Status>
);

/* ---------- taskbar ---------- */

const Taskbar = styled.div`display: flex; height: 40px; flex: none; background: linear-gradient(90deg, #202a24 0, #33341f 400px, #35331f 1100px, #3c3722);`;
const Start = styled.button`width: 48px; height: 40px; display: flex; align-items: center; justify-content: center; background: #1c2627;`;
const Search = styled.label`
  width: 344px; height: 40px; display: flex; align-items: center; gap: 9px; padding-left: 11px; background: #f2f2f2; border: 1px solid #cfcfcf;
  input { flex: 1; background: none; font-size: 14px; color: #222; }
  input::placeholder { color: #2b2b2b; opacity: 1; }
`;
const Task = styled.button<{ $open?: boolean; $on?: boolean }>`
  width: 49px; height: 40px; padding: 0 4px; display: flex; align-items: center; justify-content: center; flex: none;
  ${p => p.$open && css`background: linear-gradient(#76b9ed, #76b9ed) 4px 38px / 40px 2px no-repeat;`}
  ${p => p.$on && css`background: linear-gradient(#76b9ed, #76b9ed) 0 38px / 49px 2px no-repeat, #616152;`}
`;

const TaskArt: [string, boolean, boolean, React.ReactNode][] = [
  ["Cortana", false, false, <circle cx="12" cy="12" r="6.500" fill="none" stroke="#fff" strokeWidth="2" />],
  ["任务视图", false, false, <path d="M3 4v2h10V4M3 20v-2h10v2M4 9h8v6H4zM17 4v4M17 12v8M16 10h3" fill="none" stroke="#fff" strokeWidth="1.300" />],
  ["Edge", false, false, <g><circle cx="12" cy="12" r="12" fill="#1a6fc4" /><path d="M0 11A12 12 0 0 1 24 10q0 6-6 6-5 0-4-3-1-5-6-5T0 13z" fill="#36c3a6" /><path d="M0 12q2-6 8-5 6 1 6 5-5-2-4 3 1 6 9 5Q12 27 4 20 0 16 0 12z" fill="#1683d8" /><path d="M9 11q-4 5 1 10 5 3 12-2-8 3-11-1-2-4 1-5z" fill="#114a8b" /></g>],
  ["文件资源管理器", true, false, <g><path d="M1 3h9l2 2h11v17H1z" fill="#f0c04a" /><path d="M1 7h22v14H1z" fill="#fbdc7c" /><path d="M5 14h14v8h-4v-4H9v4H5z" fill="#3f8fd0" /></g>],
  ["截图工具", false, false, <g><ellipse cx="12" cy="11" rx="12" ry="8.500" transform="rotate(-22 12 11)" fill="#b8706c" /><ellipse cx="13" cy="8" rx="10" ry="6.500" transform="rotate(-22 13 8)" fill="#eee" /><path d="M13 8l5 10M20 11l-6 8" stroke="#777" strokeWidth="1.500" /><circle cx="14" cy="20" r="2.500" fill="none" stroke="#3c86b8" strokeWidth="2" /><circle cx="20" cy="18" r="2.500" fill="none" stroke="#3c86b8" strokeWidth="2" /></g>],
  ["画图", true, false, <g><ellipse cx="11" cy="15" rx="11" ry="8.500" transform="rotate(-25 11 15)" fill="#cfe2ee" /><circle cx="5" cy="15" r="2" fill="#b33" /><circle cx="8" cy="10" r="2" fill="#4a4" /><circle cx="14" cy="9" r="2" fill="#e5b62c" /><circle cx="10" cy="20" r="2" fill="#37b" /><path d="M22 1l-6 21" stroke="#c98b3c" strokeWidth="2.500" /><path d="M19 0h5l-1 6h-4z" fill="#d8b070" /></g>],
  ["Firefox", false, false, <g><path d="M12 24A11.500 11.500 0 0 1 2 7l2 1 2-5 3 4 5-1 0-6q10 5 10 13a11 11 0 0 1-12 11z" fill="#ff7a2a" /><path d="M14 0q9 5 9 12-2-4-5-5-5-2-4-7z" fill="#ffd43a" /><circle cx="12" cy="14" r="5.500" fill="#7a3ac8" /><path d="M2 12q4-4 8-1-4 1-3 5t8 3q-4 6-10 1-3-4-3-8z" fill="#ff4f4a" /></g>],
  ["图片查看器", true, false, <g><path d="M0 0h24v24H0z" fill="#5b7fc0" /><path d="M2 2h20v20H2z" fill="#f4f6fa" /><path d="M3 11q10 0 14-8h-4q-3 6-10 6z" fill="#3b67b8" /><path d="M3 21q14-2 18-15-3 9-18 12z" fill="#e9992c" /></g>],
  ["3ds Max", true, true, <g><path d="M0 0h24v24H0z" fill="#dfeef0" /><path d="M7 4q10-3 10 2 0 4-5 5 6 0 5 5-2 4-11 2" fill="none" stroke="#12857c" strokeWidth="3.500" /><text x="13" y="23" fontSize="5" fontWeight="700" fill="#12857c">MAX</text></g>],
  ["YOKO", true, false, <g><rect width="24" height="24" rx="4" fill="#fff" /><path d="M17 8q3 2 0 4L9 16" fill="none" stroke="#1ea5e8" strokeWidth="5" /><path d="M8 4l8 5" stroke="#f02a6a" strokeWidth="5" strokeLinecap="round" /><text x="3" y="22" fontSize="7" fontWeight="700" fill="#f02a6a">YOK</text><rect x="12" y="14" width="13" height="11" rx="2" fill="#cfe8fa" stroke="#5aa5dc" /><path d="M16 16l5 3.500-5 3.500z" fill="#1c83d0" /></g>],
];

const TaskBar = () => (
  <Taskbar>
    <Start aria-label="开始"><svg width="17" height="17" viewBox="0 0 17 17"><path d="M0 2.500l7-1V8H0zM8 1.300L17 0v8H8zM0 9h7v6.500l-7-1zM8 9h9v8l-9-1.300z" fill="#fff" /></svg></Start>
    <Search>
      <svg width="18" height="18" viewBox="0 0 18 18"><circle cx="11" cy="6.500" r="5" fill="none" stroke="#222" strokeWidth="1.300" /><path d="M7.500 10.500L1 17" stroke="#222" strokeWidth="1.300" /></svg>
      <input aria-label="搜索" placeholder="在这里输入你要搜索的内容" />
    </Search>
    {TaskArt.map(([n, open, on, art]) => (
      <Task key={n} $open={open} $on={on} aria-label={n}><svg width="24" height="24" viewBox="0 0 24 24" overflow="visible">{art}</svg></Task>
    ))}
  </Taskbar>
);

/* ---------- brand card ---------- */

const Brand = styled.div`
  position: fixed; z-index: 10; right: 0; bottom: 0; width: 494px; height: 247px; background: #fff; color: #0a0a0a;
  display: flex; align-items: center; padding: 0 0 2px 44px; gap: 2px;
`;
const BrandText = styled.div`display: flex; flex-direction: column; padding: 8px 0 0 2px; white-space: nowrap;`;
const BrandName = styled.strong`font: italic 900 53px/48px "Noto Sans CJK SC", sans-serif;`;
const BrandUrl = styled.span`font: italic 600 35px/38px "Open Sans", "Noto Sans", sans-serif;`;

const BrandCard = () => (
  <Brand>
    <svg width="130" height="106" viewBox="0 0 130 106" aria-hidden="true">
      <defs><linearGradient id="tower" x1="0" y1="0" x2="0" y2="1"><stop offset="0" stopColor="#133a94" /><stop offset="1" stopColor="#5d8fd0" /></linearGradient></defs>
      <path d="M10 45Q32 5 84 1q53-2 44 46l-4-1Q128 10 88 10 44 12 10 45z" fill="#8fc320" />
      <path d="M4 56Q-8 96 30 104q40 8 72-18 26-22 29-43-12 30-45 44-38 17-66 6Q2 84 4 56z" fill="#123c95" />
      <path d="M67 20l22 12v10L77 47v35H67zM100 43l18 6-6 12-12 11z" fill="#dcdee0" />
      <path d="M39 28L63 16V84H39z" fill="url(#tower)" />
      <path d="M10 66L29 54V83Q14 80 10 66zM76 48L95 41V72L76 80z" fill="#123c95" />
    </svg>
    <BrandText><BrandName>土木工程网</BrandName><BrandUrl>www.civilcn.com</BrandUrl></BrandText>
  </Brand>
);

export default function App() {
  return (
    <Shell>
      <Global />
      <AppHeader />
      <MainToolbar />
      <Ribbon />
      <Main>
        <LeftStrip>
          <Play aria-label="展开布局"><svg width="6" height="10"><path d="M0 0l6 5-6 5z" fill="#ddd" /></svg></Play>
          <Layout aria-label="视口布局"><LayoutInner /></Layout>
        </LeftStrip>
        <SceneExplorer />
        <ViewportColumn />
        <CommandPanel />
      </Main>
      <StatusBar />
      <TaskBar />
      <BrandCard />
    </Shell>
  );
}
